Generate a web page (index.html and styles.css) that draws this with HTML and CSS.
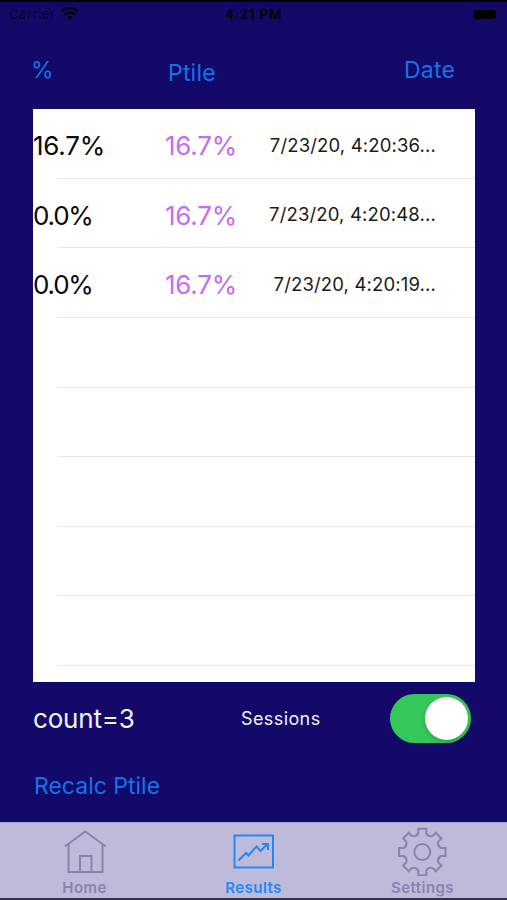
FILE: index.html
```
<!DOCTYPE html>
<html lang="en">
<head>
    <meta charset="UTF-8">
    <meta name="viewport" content="width=device-width, initial-scale=1.0">
    <title>Results</title>
    <link rel="stylesheet" href="styles.css">
</head>
<body>
    <!-- Status bar -->
    <header class="status-bar">
        <div class="carrier">
            <span>Carrier</span>
            <svg class="wifi" width="18" height="14" viewBox="0 0 18 14">
                <path d="M1 4.2 A11.5 11.5 0 0 1 17 4.2" fill="none" stroke="#000" stroke-width="2.6"/>
                <path d="M3.8 7.6 A7.4 7.4 0 0 1 14.2 7.6" fill="none" stroke="#000" stroke-width="2.4"/>
                <path d="M6.2 10 Q9 7.8 11.8 10 L9 13 Z" fill="#000"/>
            </svg>
        </div>
        <span class="time">4:21 PM</span>
        <span class="battery"></span>
    </header>

    <!-- Column headings -->
    <div class="headings">
        <button class="heading heading-percent">%</button>
        <button class="heading heading-ptile">Ptile</button>
        <button class="heading heading-date">Date</button>
    </div>

    <!-- Session results -->
    <main class="results">
        <div class="row">
            <span class="score">16.7%</span>
            <span class="ptile">16.7%</span>
            <span class="date">7/23/20, 4:20:36...</span>
        </div>
        <div class="row">
            <span class="score zero">0.0%</span>
            <span class="ptile">16.7%</span>
            <span class="date">7/23/20, 4:20:48...</span>
        </div>
        <div class="row">
            <span class="score zero">0.0%</span>
            <span class="ptile">16.7%</span>
            <span class="date">7/23/20, 4:20:19...</span>
        </div>
        <div class="row"></div>
        <div class="row"></div>
        <div class="row"></div>
        <div class="row"></div>
        <div class="row"></div>
    </main>

    <div class="summary">
        <span class="count">count=3</span>
        <span class="sessions">Sessions</span>
        <div class="switch"><div class="knob"></div></div>
    </div>

    <button class="recalc">Recalc Ptile</button>

    <!-- Tab bar -->
    <nav class="tabs">
        <a class="tab">
            <svg width="50" height="50" viewBox="0 0 50 50">
                <path d="M4.8 20.5 L25.3 5.5 L45.8 20.5 M8.5 18.5 V46 H42.5 V18.5 M20 46 V30 H31.5 V46"/>
            </svg>
            <span>Home</span>
        </a>
        <a class="tab active">
            <svg width="50" height="50" viewBox="0 0 50 50">
                <rect x="5.5" y="9.5" width="38.5" height="32"/>
                <path d="M9.5 34.5 L17 27 L19.5 29.5 L27.5 20.5 L31.5 25 L38.5 18 M33 18 H39 V24"/>
            </svg>
            <span>Results</span>
        </a>
        <a class="tab">
            <svg width="50" height="50" viewBox="0 0 50 50">
                <path id="gear"/>
                <circle cx="24.3" cy="26" r="8"/>
            </svg>
            <span>Settings</span>
        </a>
    </nav>

    <script>
        // Gear outline: one tooth and one valley, repeated eight times
        const tooth = [[-4, -18.8], [-4, -23.2], [4, -23.2], [4, -18.8]];

        function turn(point, step) {
            const a = step * Math.PI / 4;
            const x = 24.3 + point[0] * Math.cos(a) - point[1] * Math.sin(a);
            const y = 26 + point[0] * Math.sin(a) + point[1] * Math.cos(a);
            return x.toFixed(2) + ' ' + y.toFixed(2);
        }

        let d = '';
        for (let i = 0; i < 8; i++) {
            d += (i ? 'L' : 'M') + tooth.map(p => turn(p, i)).join(' L');
            d += ' Q' + turn([6.1, -14.8], i) + ' ' + turn(tooth[0], i + 1) + ' ';
        }
        document.getElementById('gear').setAttribute('d', d + 'Z');
    </script>
</body>
</html>
```
FILE: styles.css
```
* {
    box-sizing: border-box;
}
body {
    margin: 0;
    height: 900px;
    overflow: hidden;
    display: flex;
    flex-direction: column;
    background-color: #130969;
    border-top: 2px solid #000;
    font-family: Inter, "Liberation Sans", sans-serif;
}
button {
    background: none;
    border: none;
    padding: 0;
    font-family: inherit;
    color: #1274ea;
}
.status-bar {
    height: 24px;
    flex: none;
    display: grid;
    grid-template-columns: 1fr auto 1fr;
    align-items: center;
    padding: 0 9px 0 9px;
    font-size: 13px;
    color: #06032c;
}
.carrier {
    display: flex;
    align-items: center;
    gap: 6px;
    letter-spacing: 0.55px;
}
.time {
    font-weight: 600;
    font-size: 13.5px;
    letter-spacing: 0.75px;
    color: #000;
}
.battery {
    justify-self: end;
    margin-right: 2px;
    width: 23px;
    height: 9px;
    border-radius: 3px;
    background-color: #000;
}
.headings {
    height: 83px;
    flex: none;
    display: flex;
    align-items: flex-start;
    padding-left: 31px;
}
.heading {
    font-size: 23px;
    line-height: 28px;
    text-align: left;
}
.heading-percent {
    width: 137px;
    margin-top: 30px;
}
.heading-ptile {
    width: 236px;
    margin-top: 33px;
    letter-spacing: 0.2px;
}
.heading-date {
    margin-top: 30px;
    letter-spacing: 0.2px;
}
.results {
    height: 573px;
    flex: none;
    margin: 0 32px 0 33px;
    background-color: #fff;
    overflow: hidden;
}
.row {
    height: 69.65px;
    display: flex;
    align-items: center;
    background: linear-gradient(#e6e6e8, #e6e6e8) 24px 100% / 100% 1.4px no-repeat;
}
.row:first-child {
    height: 70px;
}
.score,
.ptile {
    width: 132px;
    padding-top: 3px;
    font-size: 26px;
    letter-spacing: -0.25px;
    color: #0a0a0a;
}
.zero {
    letter-spacing: -1.2px;
}
.ptile {
    width: 72px;
    color: #c66cf0;
}
.date {
    flex: 1;
    padding: 1px 39px 0 0;
    text-align: right;
    white-space: nowrap;
    font-size: 18.5px;
    letter-spacing: 0.15px;
    color: #1a1a1a;
}
.summary {
    height: 73px;
    flex: none;
    display: flex;
    align-items: center;
    padding: 0 36px 0 33px;
    color: #f2f0ff;
}
.count {
    width: 208px;
    font-size: 26px;
    letter-spacing: -0.2px;
}
.sessions {
    flex: 1;
    font-size: 18px;
    letter-spacing: 0.4px;
}
.switch {
    width: 81px;
    height: 49px;
    border-radius: 25px;
    padding: 3px;
    display: flex;
    justify-content: flex-end;
    background-color: #35c759;
}
.knob {
    width: 43px;
    height: 43px;
    border-radius: 50%;
    background-color: #fff;
    box-shadow: 0 2px 4px rgba(0, 0, 0, 0.2);
}
.recalc {
    align-self: flex-start;
    margin: 17px 0 0 34px;
    font-size: 23px;
    line-height: 28px;
}
.tabs {
    height: 78px;
    flex: none;
    margin-top: auto;
    display: grid;
    grid-template-columns: repeat(3, 1fr);
    background-color: #bebada;
    border-top: 1px solid #aaa5cf;
    border-bottom: 2px solid #33304b;
}
.tab {
    display: flex;
    flex-direction: column;
    align-items: center;
    padding-top: 3px;
    font-size: 15px;
    font-weight: 600;
    line-height: 20px;
    letter-spacing: 0.45px;
    color: #8984ab;
}
.tab svg {
    fill: none;
    stroke: currentColor;
    stroke-width: 2;
}
.tab span {
    margin-top: 2px;
}
.active {
    color: #2488f2;
}
```
